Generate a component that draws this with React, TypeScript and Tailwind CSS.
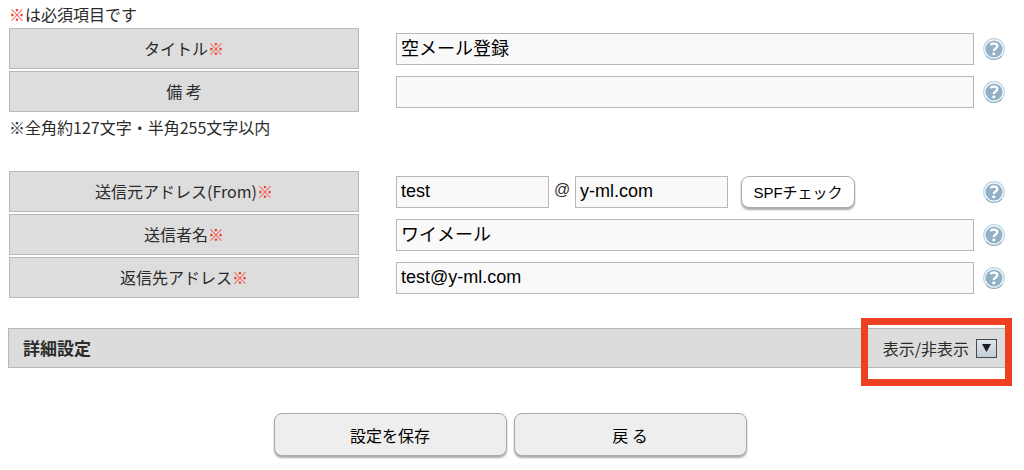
import { useState, type ReactNode } from "react";

interface FieldRowProps {
  label: string;
  htmlFor: string;
  required?: boolean;
  children: ReactNode;
}

const inputClass =
  "h-8 min-w-0 border border-[#b8b8b8] bg-[#f9f9f9] px-1 font-['Liberation_Sans','Noto_Sans_CJK_JP',sans-serif] text-[18px] text-black outline-none";

const submitClass =
  "h-[43px] w-[233px] rounded-lg border border-[#aaa] bg-[#eee] text-[16px] text-black shadow-[0_2px_2px_#aaa] cursor-pointer";

function Required() {
  return <span className="font-medium text-[#f5382a]">※</span>;
}

function HelpButton({ label }: { label: string }) {
  return (
    <button type="button" aria-label={`${label}のヘルプ`} className="cursor-pointer">
      <svg viewBox="0 0 22 22" className="block h-[22px] w-[22px]" fill="none">
        <circle cx="11" cy="11" r="10.3" fill="#fff" stroke="#bdd6e8" strokeWidth="1.2" />
        <path d="M3.2 17.8a10.3 10.3 0 0 0 15.6 0" stroke="#98b4c6" strokeWidth="1.2" />
        <circle cx="11" cy="11" r="8.6" fill="#92b1c6" />
        <path
          d="M7.6 7.2C9 4.9 14.3 4.9 14.3 8.1c0 2.4-3.5 2.4-3.5 5"
          stroke="#fff"
          strokeWidth="2.4"
        />
        <rect x="9.4" y="14.6" width="2.8" height="2.6" rx="0.6" fill="#fff" />
      </svg>
    </button>
  );
}

function FieldRow({ label, htmlFor, required = false, children }: FieldRowProps) {
  return (
    <div className="flex items-center">
      <label
        htmlFor={htmlFor}
        className="flex h-[41px] w-[350px] shrink-0 items-center justify-center border border-[#b8b8b8] bg-[#ddd] pb-0.5"
      >
        {label}
        {required && <Required />}
      </label>
      <div className="ml-[37px] mr-[9px] flex min-w-0 flex-1 items-center">{children}</div>
      <HelpButton label={label} />
    </div>
  );
}

export default function App() {
  const [open, setOpen] = useState(false);

  return (
    <form
      onSubmit={(e) => e.preventDefault()}
      className="bg-white pb-[14px] font-['Noto_Sans_CJK_JP',sans-serif] text-[16px] text-[#2b2b2b]"
    >
      <div className="pl-[9px] pr-[19px]">
        <p className="leading-7">
          <Required />
          は必須項目です
        </p>

        <div className="flex flex-col gap-0.5">
          <FieldRow label="タイトル" htmlFor="title" required>
            <input id="title" type="text" defaultValue="空メール登録" className={`${inputClass} flex-1 pb-1`} />
          </FieldRow>
          <FieldRow label="備 考" htmlFor="note">
            <input id="note" type="text" className={`${inputClass} flex-1`} />
          </FieldRow>
        </div>

        <p className="leading-[30px]">※全角約127文字・半角255文字以内</p>

        <div className="mt-[29px] flex flex-col gap-0.5">
          <FieldRow label="送信元アドレス(From)" htmlFor="from-user" required>
            <input id="from-user" type="text" defaultValue="test" className={`${inputClass} w-[153px]`} />
            <span className="w-[26px] pb-1 text-center font-['Liberation_Sans',sans-serif]">@</span>
            <input
              type="text"
              aria-label="ドメイン"
              defaultValue="y-ml.com"
              className={`${inputClass} w-[153px]`}
            />
            <button
              type="button"
              className="ml-[13px] h-8 w-[114px] shrink-0 cursor-pointer rounded-lg border border-[#aaa] bg-white pt-1 font-['Liberation_Sans','Noto_Sans_CJK_JP',sans-serif] text-[15px] text-black shadow-[0_2px_2px_#aaa]"
            >
              SPFチェック
            </button>
          </FieldRow>
          <FieldRow label="送信者名" htmlFor="sender" required>
            <input id="sender" type="text" defaultValue="ワイメール" className={`${inputClass} flex-1 pb-1`} />
          </FieldRow>
          <FieldRow label="返信先アドレス" htmlFor="reply-to" required>
            <input id="reply-to" type="text" defaultValue="test@y-ml.com" className={`${inputClass} flex-1`} />
          </FieldRow>
        </div>
      </div>

      <div className="pl-2 pr-3">
        <div className="relative mt-[30px] flex h-10 items-center justify-between border border-[#b8b8b8] bg-[#dcdcdc] pl-[14px] pr-[14px]">
          <h2 className="text-[17px] font-bold">詳細設定</h2>
          <div className="flex items-center gap-[7px]">
            <label htmlFor="toggle-detail">表示/非表示</label>
            <button
              id="toggle-detail"
              type="button"
              aria-expanded={open}
              onClick={() => setOpen(!open)}
              className="flex h-[19px] w-[21px] cursor-pointer items-center justify-center border border-[#444b52] bg-linear-to-b from-[#dfe6ec] to-[#c3ccd5]"
            >
              <svg viewBox="0 0 9 8" className="h-2 w-[9px]" fill="#1c1c1c">
                <path d="M0 0h9L4.5 8z" />
              </svg>
            </button>
          </div>
          <div className="pointer-events-none absolute -right-px -top-[11px] h-[68px] w-[151px] border-7 border-[#ee4023]" />
        </div>

        <div className="mt-[45px] flex justify-center gap-[7px]">
          <button type="submit" className={submitClass}>
            設定を保存
          </button>
          <button type="button" className={submitClass}>
            戻 る
          </button>
        </div>
      </div>
    </form>
  );
}
